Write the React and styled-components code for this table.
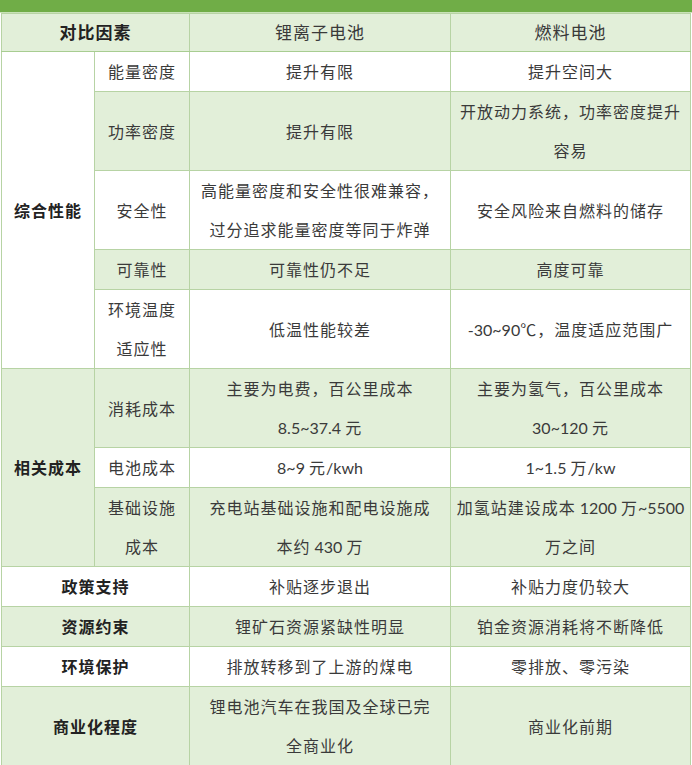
import React from 'react';
import styled, { createGlobalStyle } from 'styled-components';

const GlobalStyle = createGlobalStyle`
  html, body {
    margin: 0;
    padding: 0;
    background: #ffffff;
  }
  body {
    font-family: Lato, "Noto Sans CJK SC", sans-serif;
    color: #333333;
  }
`;

const Page = styled.div`
  width: 692px;
  display: flex;
  flex-direction: column;
`;

const TitleBar = styled.div`
  height: 12px;
  background: #70ad47;
  border-bottom: 1px solid #c9e2b8;
`;

const Table = styled.table`
  width: 689px;
  margin-left: 1px;
  border-collapse: collapse;
  table-layout: fixed;
  font-size: 16px;
  letter-spacing: 1px;
`;

const Cell = styled.td`
  border: 1px solid #b7d3a4;
  padding: 0 4px;
  line-height: 39px;
  text-align: center;
  vertical-align: middle;
  white-space: nowrap;
  background: ${(p) => (p.$green ? '#e2efd9' : '#ffffff')};
  font-weight: ${(p) => (p.$bold ? 700 : 400)};
  color: ${(p) => (p.$bold ? '#222222' : '#3a3a3a')};
`;

const HeadCell = styled(Cell).attrs({ as: 'th' })`
  line-height: 37px;
  font-size: 17px;
  background: #e2efd9;
  border-bottom: 1px solid #a8cd91;
`;

const Latin = styled.span`
  letter-spacing: 0;
`;

const groups = [
  {
    label: '综合性能',
    green: false,
    rows: [
      { name: ['能量密度'], li: ['提升有限'], fc: ['提升空间大'], green: false },
      { name: ['功率密度'], li: ['提升有限'], fc: ['开放动力系统，功率密度提升', '容易'], green: true },
      {
        name: ['安全性'],
        li: ['高能量密度和安全性很难兼容，', '过分追求能量密度等同于炸弹'],
        fc: ['安全风险来自燃料的储存'],
        green: false,
      },
      { name: ['可靠性'], li: ['可靠性仍不足'], fc: ['高度可靠'], green: true },
      { name: ['环境温度', '适应性'], li: ['低温性能较差'], fc: ['-30~90℃，温度适应范围广'], green: false },
    ],
  },
  {
    label: '相关成本',
    green: true,
    rows: [
      {
        name: ['消耗成本'],
        li: ['主要为电费，百公里成本', '8.5~37.4 元'],
        fc: ['主要为氢气，百公里成本', '30~120 元'],
        green: true,
      },
      { name: ['电池成本'], li: ['8~9 元/kwh'], fc: ['1~1.5 万/kw'], green: false },
      {
        name: ['基础设施', '成本'],
        li: ['充电站基础设施和配电设施成', '本约 430 万'],
        fc: ['加氢站建设成本 1200 万~5500', '万之间'],
        green: true,
      },
    ],
  },
];

const singles = [
  { label: '政策支持', li: ['补贴逐步退出'], fc: ['补贴力度仍较大'], green: false },
  { label: '资源约束', li: ['锂矿石资源紧缺性明显'], fc: ['铂金资源消耗将不断降低'], green: true },
  { label: '环境保护', li: ['排放转移到了上游的煤电'], fc: ['零排放、零污染'], green: false },
  { label: '商业化程度', li: ['锂电池汽车在我国及全球已完', '全商业化'], fc: ['商业化前期'], green: true },
];

// digits and latin letters get no extra tracking, like the narrow font in the source
const Text = ({ value }) =>
  value.split(/([\x20-\x7e]+)/).map((part, i) =>
    /^[\x20-\x7e]+$/.test(part) ? <Latin key={i}>{part}</Latin> : part
  );

const Lines = ({ lines }) =>
  lines.map((line, i) => (
    <React.Fragment key={i}>
      {i > 0 && <br />}
      <Text value={line} />
    </React.Fragment>
  ));

export default function App() {
  return (
    <Page>
      <GlobalStyle />
      <TitleBar />
      <Table>
        <colgroup>
          <col style={{ width: 93 }} />
          <col style={{ width: 95 }} />
          <col style={{ width: 261 }} />
          <col style={{ width: 240 }} />
        </colgroup>
        <thead>
          <tr>
            <HeadCell colSpan={2} $bold>
              对比因素
            </HeadCell>
            <HeadCell>锂离子电池</HeadCell>
            <HeadCell>燃料电池</HeadCell>
          </tr>
        </thead>
        <tbody>
          {groups.map((group) =>
            group.rows.map((row, i) => (
              <tr key={group.label + i}>
                {i === 0 && (
                  <Cell rowSpan={group.rows.length} $bold $green={group.green}>
                    {group.label}
                  </Cell>
                )}
                <Cell $green={row.green}>
                  <Lines lines={row.name} />
                </Cell>
                <Cell $green={row.green}>
                  <Lines lines={row.li} />
                </Cell>
                <Cell $green={row.green}>
                  <Lines lines={row.fc} />
                </Cell>
              </tr>
            ))
          )}
          {singles.map((row) => (
            <tr key={row.label}>
              <Cell colSpan={2} $bold $green={row.green}>
                {row.label}
              </Cell>
              <Cell $green={row.green}>
                <Lines lines={row.li} />
              </Cell>
              <Cell $green={row.green}>
                <Lines lines={row.fc} />
              </Cell>
            </tr>
          ))}
        </tbody>
      </Table>
    </Page>
  );
}
